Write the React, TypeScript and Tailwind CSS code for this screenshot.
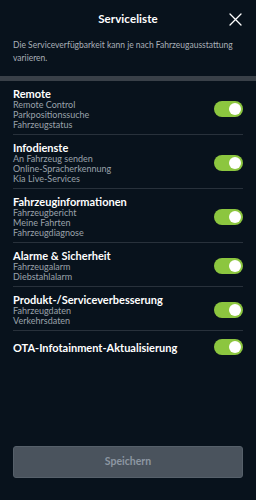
import React from "react";

type Service = {
    title: string;
    items: string[];
};

const services: Service[] = [
    { title: "Remote", items: ["Remote Control", "Parkpositionssuche", "Fahrzeugstatus"] },
    { title: "Infodienste", items: ["An Fahrzeug senden", "Online-Spracherkennung", "Kia Live-Services"] },
    { title: "Fahrzeuginformationen", items: ["Fahrzeugbericht", "Meine Fahrten", "Fahrzeugdiagnose"] },
    { title: "Alarme & Sicherheit", items: ["Fahrzeugalarm", "Diebstahlalarm"] },
    { title: "Produkt-/Serviceverbesserung", items: ["Fahrzeugdaten", "Verkehrsdaten"] },
    { title: "OTA-Infotainment-Aktualisierung", items: [] },
];

const Toggle = () => (
    <div className="w-[29px] h-[16px] rounded-full bg-[#8cc63f] flex items-center justify-end pr-[2px] shrink-0">
        <div className="w-[12px] h-[12px] rounded-full bg-white" />
    </div>
);

const App = () => {
    return (
        <div
            className="w-[256px] h-[500px] bg-[#08121c] text-white flex flex-col"
            style={{ fontFamily: 'Lato, "Noto Sans", sans-serif' }}
        >
            <div className="relative h-[37px] flex items-center justify-center">
                <h1 className="text-[11.5px] font-bold tracking-[0.1px]">Serviceliste</h1>
                <button className="absolute right-[14px] top-[12px] w-[14px] h-[14px] flex items-center justify-center">
                    <svg width="13" height="13" viewBox="0 0 13 13" fill="none" stroke="white" strokeWidth="1.3" strokeLinecap="round">
                        <path d="M1 1 L12 12 M12 1 L1 12" />
                    </svg>
                </button>
            </div>

            <p className="px-[13px] pt-[2px] text-[8.5px] leading-[12.5px] text-[#a9b0b8] h-[39px]">
                Die Serviceverfügbarkeit kann je nach Fahrzeugausstattung variieren.
            </p>

            <div className="h-[5px] bg-[#394048]" />

            <div className="px-[13px]">
                {services.map((s, i) => (
                    <div
                        key={s.title}
                        className={
                            "flex items-center justify-between " +
                            (s.items.length === 0 ? "py-[8px] " : "pt-[6px] pb-[4px] ") +
                            (i < services.length - 1 ? "border-b border-[#28313b]" : "")
                        }
                    >
                        <div className="flex flex-col">
                            <span className="text-[11px] leading-[13px] font-bold">{s.title}</span>
                            {s.items.map((it) => (
                                <span key={it} className="text-[9px] leading-[10px] text-[#9aa2ab]">
                                    {it}
                                </span>
                            ))}
                        </div>
                        <Toggle />
                    </div>
                ))}
            </div>

            <div className="flex-1" />

            <div className="px-[13px] pb-[22px]">
                <button className="w-full h-[32px] rounded-[3px] bg-[#4a535d] border border-[#56606a] text-[10.5px] font-bold text-[#8d97a2]">
                    Speichern
                </button>
            </div>
        </div>
    );
};

export default App;
